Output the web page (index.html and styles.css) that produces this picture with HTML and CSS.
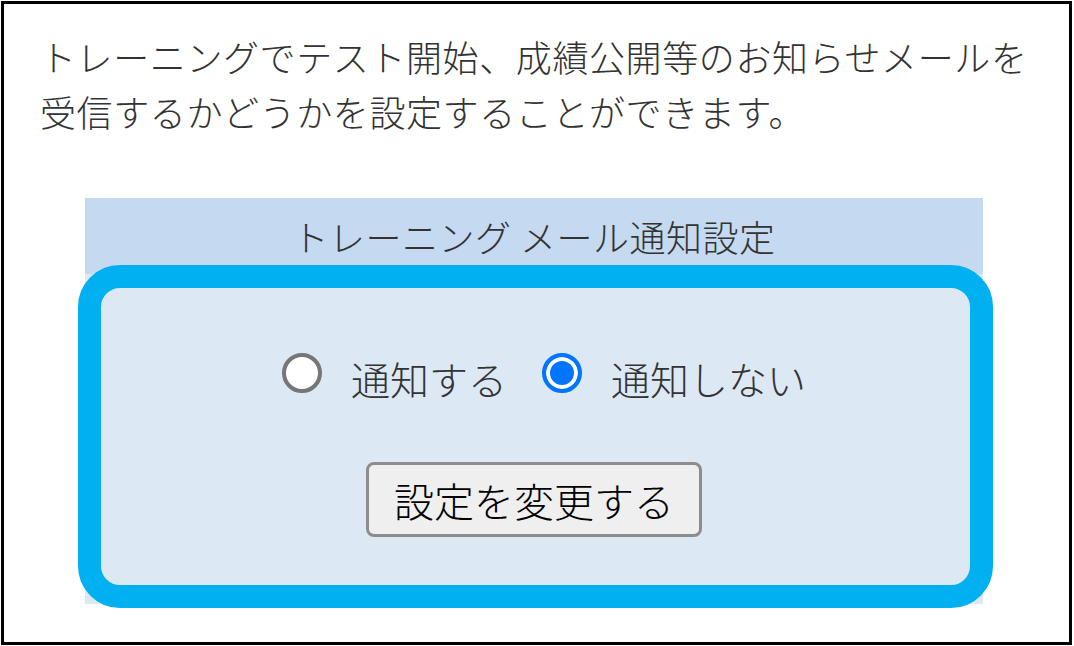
FILE: index.html
```html
<!DOCTYPE html>
<html lang="ja">
<head>
<meta charset="utf-8">
<title>トレーニング メール通知設定</title>
<link rel="stylesheet" href="styles.css">
</head>
<body>
<div class="frame">
  <p class="intro">トレーニングでテスト開始、成績公開等のお知らせメールを<br>受信するかどうかを設定することができます。</p>
  <section class="settings">
    <h2 class="settings-title">トレーニング メール通知設定</h2>
    <form class="settings-body">
      <div class="options">
        <label class="option"><input type="radio" name="notify" class="radio" value="on"><span>通知する</span></label>
        <label class="option"><input type="radio" name="notify" class="radio" value="off" checked><span>通知しない</span></label>
      </div>
      <button type="button" class="change-btn">設定を変更する</button>
    </form>
    <div class="highlight"></div>
  </section>
</div>
</body>
</html>
```
FILE: styles.css
```css
html, body {
  margin: 0;
  padding: 0;
  background: #ffffff;
}

body {
  font-family: "Noto Sans CJK JP", "Noto Sans", sans-serif;
  color: #333333;
}

.frame {
  box-sizing: border-box;
  margin: 1px 0 0 1px;
  width: 1071px;
  height: 644px;
  border: 3px solid #000000;
  padding: 25px 0 0 36px;
}

.intro {
  margin: 0;
  font-size: 36px;
  font-weight: 300;
  line-height: 55px;
  letter-spacing: 0.6px;
}

.settings {
  position: relative;
  width: 898px;
  margin: 59px 0 0 45px;
}

.settings-title {
  margin: 0;
  height: 76px;
  display: flex;
  align-items: center;
  justify-content: center;
  background: #c5d9f1;
  font-size: 36px;
  font-weight: 300;
  letter-spacing: 0.5px;
  color: #333333;
}

.settings-body {
  margin: 0;
  height: 330px;
  background: #dde8f5;
  display: flex;
  flex-direction: column;
  align-items: center;
  padding-top: 79px;
  box-sizing: border-box;
}

.options {
  display: flex;
  align-items: center;
  gap: 35px;
  padding-left: 20px;
  height: 40px;
}

.option {
  display: flex;
  align-items: center;
  gap: 29px;
  font-size: 39px;
  font-weight: 300;
  color: #333333;
}

.option span {
  position: relative;
  top: 5px;
}

.radio {
  appearance: none;
  -webkit-appearance: none;
  margin: 0;
  width: 40px;
  height: 40px;
  box-sizing: border-box;
  border: 4px solid #767676;
  border-radius: 50%;
  background: #ffffff;
  flex: none;
}

.radio:checked {
  border-color: #0075ff;
  background: #0075ff;
  box-shadow: inset 0 0 0 4px #ffffff;
}

.change-btn {
  margin-top: 69px;
  width: 336px;
  height: 75px;
  box-sizing: border-box;
  border: 3px solid #8d8d8d;
  border-radius: 8px;
  background: #efefef;
  font-family: "Noto Sans CJK JP", "Noto Sans", sans-serif;
  font-size: 40px;
  font-weight: 300;
  color: #000000;
  padding: 0;
}

.highlight {
  position: absolute;
  left: -7px;
  top: 67px;
  width: 915px;
  height: 343px;
  box-sizing: border-box;
  border: 23px solid #00b0f0;
  border-radius: 42px;
  pointer-events: none;
}
```
